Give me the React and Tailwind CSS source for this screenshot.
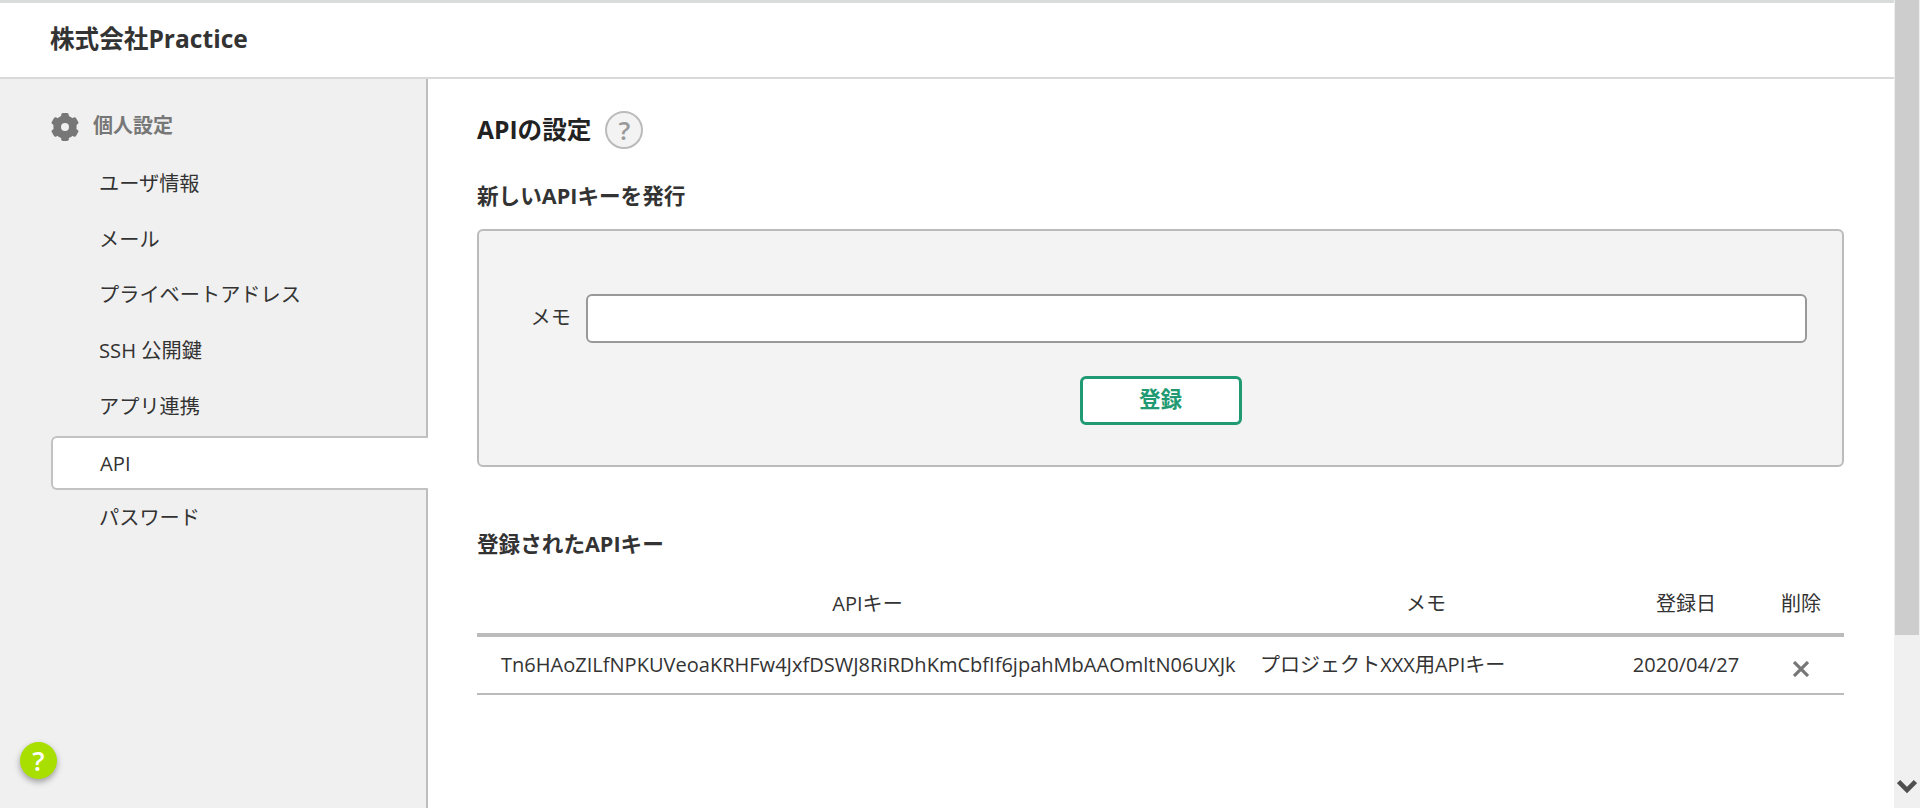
import React from "react";

const font = "font-['Open_Sans','Noto_Sans_CJK_JP',sans-serif]";
const items = ["ユーザ情報", "メール", "プライベートアドレス", "SSH 公開鍵", "アプリ連携", "API", "パスワード"];

function Gear() {
  return (
    <svg viewBox="0 0 28 28" className="w-[28px] h-[28px] mr-[14px]" fill="#777">
      <circle cx="14" cy="14" r="7.8" fill="none" stroke="#777" strokeWidth="7.6" />
      {[0, 60, 120, 180, 240, 300].map((a) => (
        <rect key={a} x="10.2" y="0" width="7.6" height="7" rx="1.8" transform={`rotate(${a} 14 14)`} />
      ))}
    </svg>
  );
}

export default function App() {
  return (
    <div className={`${font} h-[808px] w-[1920px] overflow-hidden flex bg-white text-[#333]`}>
      <div className="w-[1894px] flex flex-col">
        <header className="h-[79px] shrink-0 border-t-[3px] border-b-2 border-t-[#d8dcda] border-b-[#d9d9d9] flex items-center pl-[50px] pb-[2px] text-[24.6px] font-bold leading-none">
          株式会社Practice
        </header>
        <div className="flex flex-1 min-h-0">
          <aside className="w-[428px] shrink-0 bg-[#f0f0f0] border-r-2 border-[#bdbdbd] relative">
            <div className="flex items-center pl-[51px] pt-[17px] h-[78px] text-[#777] text-[20px] font-bold">
              <Gear />
              <span className="mb-[2px]">個人設定</span>
            </div>
            <nav className="pl-[51px] mr-[-2px] relative z-10 flex flex-col">
              {items.map((t) =>
                t === "API" ? (
                  <div key={t} className="h-[54px] mt-[1px] mb-[1px] bg-white border-2 border-r-0 border-[#c2c2c2] rounded-l-[6px] flex items-center pl-[47px] text-[20.2px]">
                    {t}
                  </div>
                ) : (
                  <div key={t} className="h-[55.6px] pb-[3px] flex items-center pl-[48px] text-[20.2px]">
                    {t}
                  </div>
                )
              )}
            </nav>
            <div className="absolute left-[20px] top-[663px] w-[37px] h-[37px] rounded-full bg-[#a9df00] shadow-[0_3px_6px_rgba(0,0,0,0.35)] flex items-center justify-center text-white font-semibold text-[27px] leading-none">
              ?
            </div>
          </aside>
          <main className="flex-1 pl-[49px] pr-[50px]">
            <div className="flex items-center h-[36px] mt-[33px]">
              <h1 className="text-[24.6px] font-bold leading-none text-[#222]">APIの設定</h1>
              <span className="ml-[14px] w-[38px] h-[38px] rounded-full border-2 border-[#bbb] bg-[#f3f3f3] flex items-center justify-center text-[#999] font-semibold text-[26px] leading-none">?</span>
            </div>
            <h2 className="mt-[34px] text-[21.6px] font-bold leading-[28px]">新しいAPIキーを発行</h2>
            <section className="mt-[19px] h-[238px] bg-[#f3f3f3] border-2 border-[#bbb] rounded-[6px] flex flex-col items-center">
              <div className="mt-[63px] w-full flex items-center">
                <label className="w-[107px] pr-[15px] pb-[3px] text-right text-[20.2px]">メモ</label>
                <input className="flex-1 mr-[35px] h-[49px] bg-white border-2 border-[#999] rounded-[6px]" />
              </div>
              <button className="mt-[33px] w-[162px] h-[49px] pb-[2px] bg-white border-[3px] border-[#1f9a72] rounded-[6px] text-[#1f9a72] font-bold text-[21.6px]">登録</button>
            </section>
            <h2 className="mt-[63px] text-[21.6px] font-bold leading-[28px]">登録されたAPIキー</h2>
            <table className="mt-[18px] w-full table-fixed text-[20.05px]">
              <thead>
                <tr className="h-[59px] border-b-4 border-[#bbb]">
                  <th className="w-[781px] font-normal">APIキー</th>
                  <th className="w-[356px] font-normal pr-[20px]">メモ</th>
                  <th className="w-[144px] font-normal">登録日</th>
                  <th className="font-normal">削除</th>
                </tr>
              </thead>
              <tbody>
                <tr className="h-[59px] border-b-2 border-[#bbb]">
                  <td className="pl-[24px] pt-[1px] whitespace-nowrap">Tn6HAoZILfNPKUVeoaKRHFw4JxfDSWJ8RiRDhKmCbfIf6jpahMbAAOmltN06UXJk</td>
                  <td className="pl-[2px] pt-[1px]">プロジェクトXXX用APIキー</td>
                  <td className="pt-[1px] text-center">2020/04/27</td>
                  <td>
                    <svg viewBox="0 0 16 16" className="w-[16px] h-[16px] mx-auto mt-[7px]" fill="none" stroke="#777" strokeWidth="3.2">
                      <path d="M1 1L15 15M15 1L1 15" />
                    </svg>
                  </td>
                </tr>
              </tbody>
            </table>
          </main>
        </div>
      </div>
      <div className="w-[26px] bg-[#f0f0f0] pl-[1px] pr-[1px] flex flex-col justify-between">
        <div className="h-[635px] bg-[#cdcdcd]" />
        <svg viewBox="0 0 20 15" className="w-[20px] h-[15px] mx-auto mb-[14px]" fill="none" stroke="#505050" strokeWidth="4.6">
          <path d="M1.6 2.5L10 11L18.4 2.5" />
        </svg>
      </div>
    </div>
  );
}
